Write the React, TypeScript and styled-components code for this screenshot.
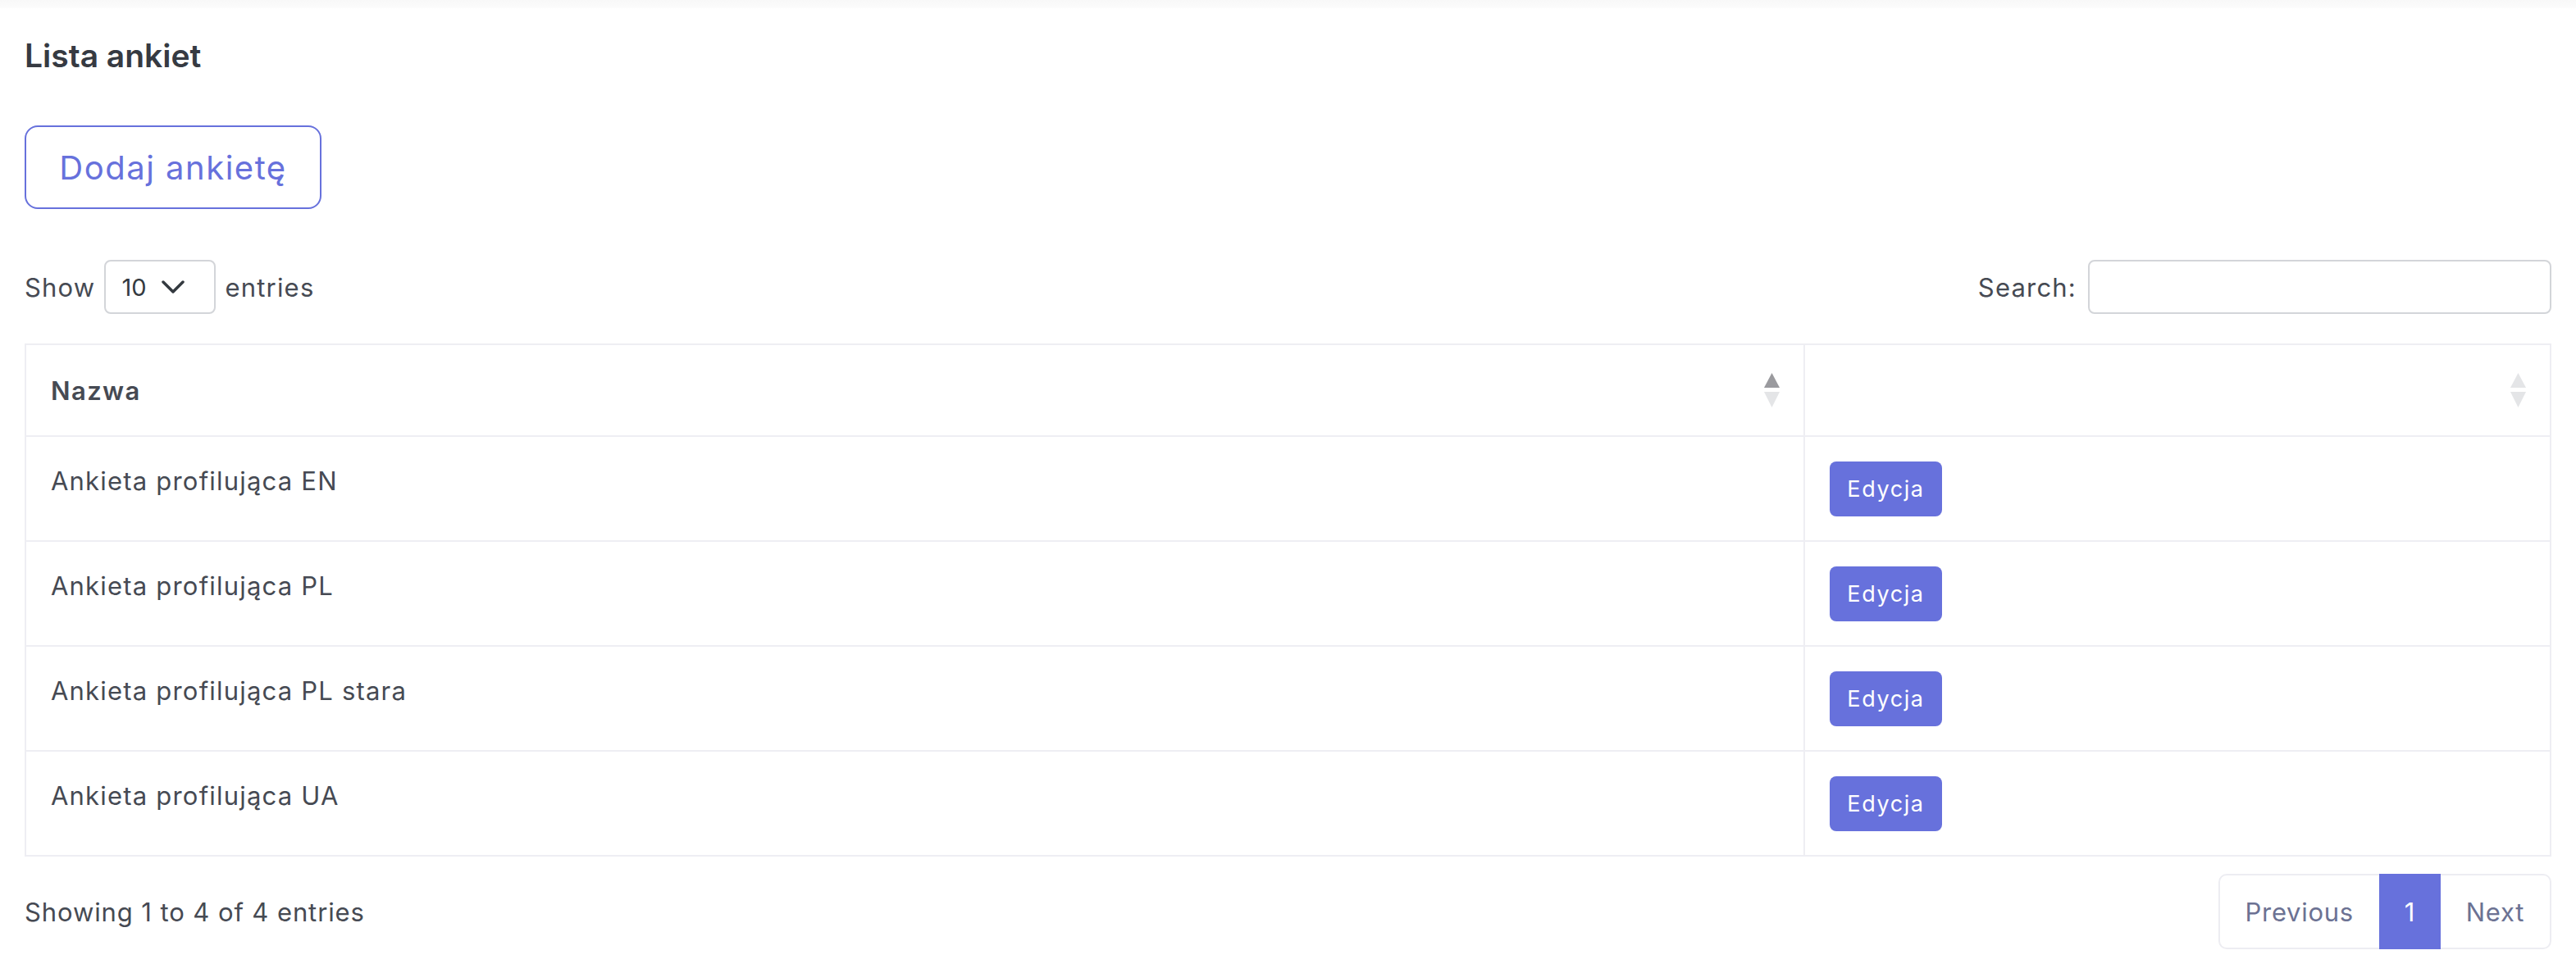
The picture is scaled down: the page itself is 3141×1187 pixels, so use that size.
import React from 'react';
import styled, { createGlobalStyle } from 'styled-components';

const GlobalStyle = createGlobalStyle`
  html, body {
    margin: 0;
    padding: 0;
    background: #ffffff;
  }
  body {
    font-family: Inter, 'Open Sans', sans-serif;
    color: #464a53;
  }
`;

const surveys = [
  'Ankieta profilująca EN',
  'Ankieta profilująca PL',
  'Ankieta profilująca PL stara',
  'Ankieta profilująca UA',
];

const SortIcon: React.FC<{ active?: 'asc' | 'desc' }> = ({ active }) => (
  <SortSvg width="19" height="42" viewBox="0 0 19 42">
    <polygon points="9.5,0 19,18 0,18" fill={active === 'asc' ? '#9a9a9e' : '#e4e5e7'} />
    <polygon points="0,23 19,23 9.5,42" fill={active === 'desc' ? '#9a9a9e' : '#e4e5e7'} />
  </SortSvg>
);

const Chevron = () => (
  <svg width="28" height="16" viewBox="0 0 28 16">
    <polyline points="2,2 14,14 26,2" fill="none" stroke="#343a40" strokeWidth="3.5" strokeLinecap="round" strokeLinejoin="round" />
  </svg>
);

export default function App() {
  return (
    <>
      <GlobalStyle />
      <TopShade />
      <Page>
        <Title>Lista ankiet</Title>
        <AddButton>Dodaj ankietę</AddButton>

        <Controls>
          <Length>
            Show
            <Select>
              <span>10</span>
              <Chevron />
            </Select>
            entries
          </Length>
          <SearchBox>
            Search:
            <SearchInput />
          </SearchBox>
        </Controls>

        <Table>
          <thead>
            <tr>
              <Th>
                <HeadInner>
                  Nazwa
                  <SortIcon active="asc" />
                </HeadInner>
              </Th>
              <Th $width={910}>
                <HeadInner>
                  <span />
                  <SortIcon />
                </HeadInner>
              </Th>
            </tr>
          </thead>
          <tbody>
            {surveys.map(name => (
              <tr key={name}>
                <Td>{name}</Td>
                <Td>
                  <EditButton>Edycja</EditButton>
                </Td>
              </tr>
            ))}
          </tbody>
        </Table>

        <Footer>
          <Info>Showing 1 to 4 of 4 entries</Info>
          <Pagination>
            <PageItem>Previous</PageItem>
            <PageItem $active>1</PageItem>
            <PageItem>Next</PageItem>
          </Pagination>
        </Footer>
      </Page>
    </>
  );
}

const TopShade = styled.div`
  height: 10px;
  background: linear-gradient(#f8f8f8, #fcfcfc);
`;

const Page = styled.div`
  padding: 0 30px 28px;
  display: flex;
  flex-direction: column;
  align-items: flex-start;
  letter-spacing: 1.2px;
`;

const Title = styled.h4`
  margin: 34px 0 0;
  font-size: 39px;
  line-height: 48px;
  font-weight: 600;
  letter-spacing: 0;
  color: #363a42;
`;

const AddButton = styled.button`
  margin-top: 61px;
  height: 102px;
  width: 362px;
  border: 2px solid #6771dc;
  border-radius: 16px;
  background: #fff;
  color: #6771dc;
  font-family: inherit;
  font-size: 40px;
  letter-spacing: 1.5px;
  font-weight: 400;
  padding: 0;
`;

const Controls = styled.div`
  margin-top: 62px;
  width: 100%;
  height: 66px;
  display: flex;
  justify-content: space-between;
  align-items: center;
  font-size: 31px;
  color: #464a53;
`;

const Length = styled.label`
  display: flex;
  align-items: center;
  gap: 11px;
`;

const Select = styled.div`
  box-sizing: border-box;
  width: 136px;
  height: 66px;
  border: 2px solid #d3d5d9;
  border-radius: 8px;
  display: flex;
  align-items: center;
  justify-content: space-between;
  padding: 0 36px 0 19px;
  font-size: 29px;
  letter-spacing: 0;
  color: #343a40;
`;

const SearchBox = styled.label`
  display: flex;
  align-items: center;
  gap: 14px;
`;

const SearchInput = styled.div`
  box-sizing: border-box;
  width: 565px;
  height: 66px;
  border: 2px solid #d3d5d9;
  border-radius: 8px;
`;

const Table = styled.table`
  margin-top: 36px;
  width: 100%;
  border-collapse: collapse;
  border: 2px solid #eeeef3;
  font-size: 31px;
`;

const Th = styled.th<{ $width?: number }>`
  box-sizing: border-box;
  height: 112px;
  width: ${p => (p.$width ? `${p.$width}px` : 'auto')};
  padding: 0 29px 0 30px;
  border: 2px solid #eeeef3;
  text-align: left;
  font-weight: 600;
  letter-spacing: 1.4px;
  color: #464a53;
  vertical-align: middle;
`;

const HeadInner = styled.div`
  display: flex;
  justify-content: space-between;
  align-items: center;
`;

const SortSvg = styled.svg`
  display: block;
`;

const Td = styled.td`
  box-sizing: border-box;
  height: 128px;
  padding: 30px 30px 29px;
  border: 2px solid #eeeef3;
  vertical-align: top;
  line-height: 48px;
  color: #464a53;
`;

const EditButton = styled.button`
  display: block;
  width: 137px;
  height: 67px;
  border: none;
  border-radius: 8px;
  background: #6771dc;
  color: #fff;
  font-family: inherit;
  font-size: 27px;
  letter-spacing: 1.6px;
  padding: 0;
`;

const Footer = styled.div`
  margin-top: 21px;
  width: 100%;
  display: flex;
  justify-content: space-between;
  align-items: center;
`;

const Info = styled.div`
  font-size: 31px;
  letter-spacing: 0.9px;
  color: #464a53;
`;

const Pagination = styled.div`
  display: flex;
  height: 92px;
  box-sizing: border-box;
  border: 2px solid #ededf2;
  border-radius: 10px;
  letter-spacing: 0.7px;
`;

const PageItem = styled.div<{ $active?: boolean }>`
  display: flex;
  align-items: center;
  justify-content: center;
  padding: 0 ${p => (p.$active ? '26px' : '31px')};
  min-width: ${p => (p.$active ? '75px' : 'auto')};
  box-sizing: border-box;
  margin: ${p => (p.$active ? '-2px 0' : '0')};
  background: ${p => (p.$active ? '#6771dc' : 'transparent')};
  color: ${p => (p.$active ? '#ffffff' : '#6c7293')};
  font-size: 31px;
`;
